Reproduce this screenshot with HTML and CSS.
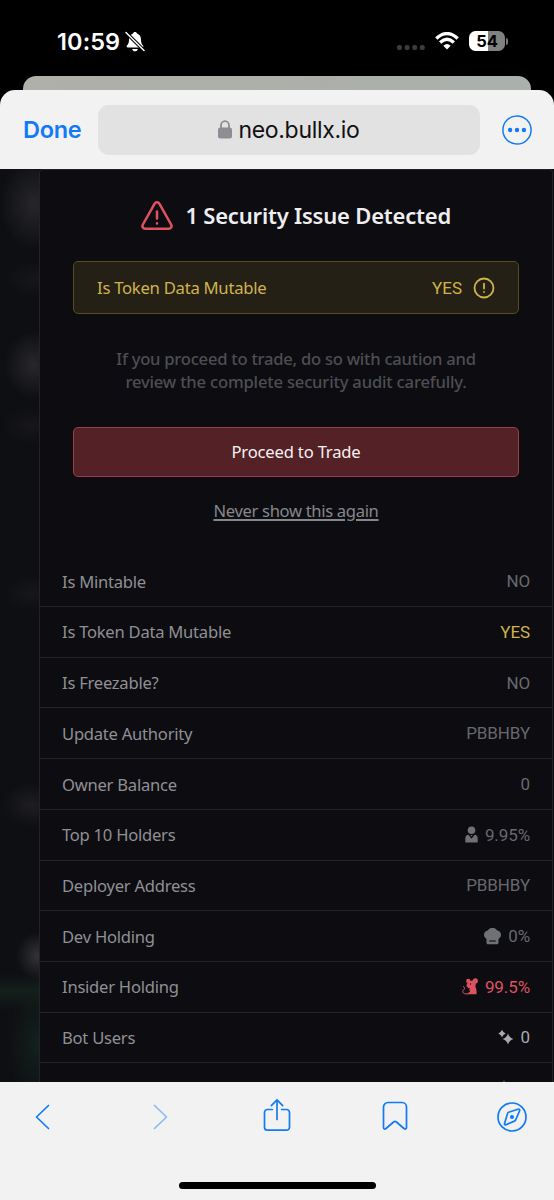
FILE: index.html
```html
<!DOCTYPE html>
<html lang="en">
<head>
<meta charset="utf-8">
<title>neo.bullx.io</title>
<link rel="stylesheet" href="styles.css">
</head>
<body>
<div class="phone">
  <header class="status">
    <div class="clock"><span>10:59</span>
      <svg width="20" height="22" viewBox="0 0 20 22"><path d="M10 1c-1.1 0-1.8.7-2 1.6C5.300 3.500 4 5.700 4 8.500c0 3.500-.8 4.700-2 6-.8.9-.3 2 .7 2h14.600c1 0 1.500-1.100.7-2-1.200-1.300-2-2.500-2-6 0-2.800-1.300-5-4-5.900C11.800 1.700 11.100 1 10 1zM7.200 18c.3 1.500 1.400 2.300 2.800 2.300s2.500-.8 2.800-2.300z" fill="#fff"/><path d="M1 1.500 19 19.500" stroke="#000" stroke-width="3.600"/><path d="M1 1.500 19 19.500" stroke="#fff" stroke-width="1.500" stroke-linecap="round"/></svg>
    </div>
    <div class="signals">
      <svg width="28" height="5" viewBox="0 0 28 5" fill="#3c3c3e"><rect width="5" height="5" rx="2"/><rect x="7.600" width="5" height="5" rx="2"/><rect x="15.200" width="5" height="5" rx="2"/><rect x="22.800" width="5" height="5" rx="2"/></svg>
      <svg class="wifi" width="24" height="18" viewBox="0 0 24 18" fill="none" stroke="#fff" stroke-width="3.300"><path d="M1.300 6.500Q12-3.300 22.700 6.500"/><path d="M5.100 10.400Q12 4.200 18.900 10.400"/><path d="m8.300 13.700 3.700 3.800 3.700-3.800Q12 10.500 8.300 13.700z" fill="#fff" stroke="none"/></svg>
      <div class="battery">54</div><i class="cap"></i>
    </div>
  </header>
  <div class="back-sheet"></div>
  <section class="sheet">
    <nav class="address">
      <span class="done">Done</span>
      <div class="url">
        <svg width="14" height="19" viewBox="0 0 14 19"><rect y="7.500" width="14" height="11" rx="2.300" fill="#8d8d92"/><path d="M3 8.500V5.500a4 4.300 0 0 1 8 0v3" fill="none" stroke="#8d8d92" stroke-width="1.800"/></svg>
        <span>neo.bullx.io</span>
      </div>
      <svg class="more" width="30" height="30" viewBox="0 0 30 30"><circle cx="15" cy="15" r="14.100" fill="none" stroke="#127af5" stroke-width="1.500"/><g fill="#127af5"><circle cx="8.100" cy="15" r="2.200"/><circle cx="15" cy="15" r="2.200"/><circle cx="21.900" cy="15" r="2.200"/></g></svg>
    </nav>
    <main class="page">
      <aside class="backdrop"></aside>
      <div class="panel">
        <h1 class="title">
          <svg width="32" height="30" viewBox="0 0 32 30" fill="none" stroke="#e05260" stroke-width="2.500" stroke-linecap="round" stroke-linejoin="round"><path d="M13.500 2.800a2.900 2.900 0 0 1 5 0l11.600 20.700c1.100 2.100 0 4.200-2.400 4.200H4.300c-2.400 0-3.500-2.100-2.400-4.200zM16 10.500v7M16 22.300v.1"/></svg>
          <span>1 Security Issue Detected</span>
        </h1>
        <div class="notice"><span class="notice-label">Is Token Data Mutable</span><span class="yes">YES</span>
          <svg width="22" height="22" viewBox="0 0 22 22" fill="none" stroke="#d0b34c" stroke-width="1.800" stroke-linecap="round"><circle cx="11" cy="11" r="9.500"/><path d="M11 6.700v4.800M11 14.900v.1"/></svg>
        </div>
        <p class="caution"><span class="c1">If you proceed to trade, do so with caution and</span><br><span class="c2">review the complete security audit carefully.</span></p>
        <button class="proceed">Proceed to Trade</button>
        <a class="never">Never show this again</a>
        <div class="list">
          <div class="row"><span>Is Mintable</span><b>NO</b></div>
          <div class="row"><span>Is Token Data Mutable</span><b class="gold">YES</b></div>
          <div class="row"><span>Is Freezable?</span><b>NO</b></div>
          <div class="row"><span>Update Authority</span><b>PBBHBY</b></div>
          <div class="row"><span>Owner Balance</span><b>0</b></div>
          <div class="row"><span>Top 10 Holders</span><b><svg width="13" height="17" viewBox="0 0 13 17" fill="#707174"><circle cx="6.500" cy="4.200" r="3.800"/><path d="M.3 16.500v-4c0-2.300 1.300-3.500 3.100-3.700l3.100 3.900 3.100-3.900c1.800.2 3.100 1.400 3.100 3.700v4z"/><path d="m5.300 9 1.200 1.400L7.700 9z"/></svg>9.95%</b></div>
          <div class="row"><span>Deployer Address</span><b>PBBHBY</b></div>
          <div class="row"><span>Dev Holding</span><b><svg width="17" height="17" viewBox="0.500 0 17 17"><path fill="#707174" d="M3 14.800V10.900A4.400 4.400 0 0 1 4.200 2.600 5.500 5.500 0 0 1 13.800 2.600 4.400 4.400 0 0 1 15 10.900v3.900c0 .9-.6 1.500-1.500 1.500h-9c-.9 0-1.500-.6-1.500-1.500z"/><path d="M5.800 13h6.400" stroke="#0c0c11" stroke-width="1.100"/></svg>0%</b></div>
          <div class="row"><span>Insider Holding</span><b class="red"><svg width="16" height="17" viewBox="0 0 16 17"><g fill="#dc5260"><circle cx="6.300" cy="2.900" r="2.200"/><circle cx="13.300" cy="2.900" r="2.600"/><path d="M4.500 7.300C5.200 4.800 7.300 2.500 10 2.500c2.600 0 4.300 2 3.700 4.200-.3 1-.4 1.500-.2 2.300 1 2 1.300 4.600 1.100 7.300H6c0-1.500.7-2.100 2-2.300-.6-1.700-.7-2.700-.3-4l-2 .2.300-1.200H5z"/></g><path d="M6.500 15.900H4c-3.300 0-4-2.600-2.200-4.200 1.400-1.300.7-2.900-.8-3.200" fill="none" stroke="#dc5260" stroke-width="1"/><circle cx="8.500" cy="6" r=".7" fill="#0c0c11"/></svg>99.5%</b></div>
          <div class="row"><span>Bot Users</span><b class="bright"><svg width="16" height="16" viewBox="0 0 16 16" fill="#aaaaad"><path d="M10 4.500Q11.300 8.700 15.500 10 11.300 11.300 10 15.500 8.700 11.300 4.500 10 8.700 8.700 10 4.500zM4 .8Q5 3.500 7.700 4.500 5 5.500 4 8.200 3 5.500.3 4.500 3 3.500 4 .8z"/></svg>0</b></div>
          <div class="row next"><svg width="6" height="8" viewBox="0 0 6 8"><path d="m3 0 3 8H0z" fill="#707174"/></svg></div>
        </div>
      </div>
    </main>
    <footer class="toolbar">
      <svg width="15" height="26" viewBox="0 0 15 26"><path d="M13.500 1.500 1.500 13l12 11.500"/></svg>
      <svg class="dim" width="15" height="26" viewBox="0 0 15 26"><path d="m1.500 1.500 12 11.500-12 11.500"/></svg>
      <svg class="share" width="28" height="34" viewBox="0 0 28 34"><path d="M9.300 11.500H4.500a3 3 0 0 0-3 3v14.700a3 3 0 0 0 3 3h19a3 3 0 0 0 3-3V14.500a3 3 0 0 0-3-3h-4.800M14 21.500V2M8.300 7.600 14 1.900l5.700 5.700"/></svg>
      <svg class="bookmark" width="26" height="30" viewBox="0 0 26 30"><path d="M6 1.500h14a4.500 4.500 0 0 1 4.500 4.500v20.500c0 1.600-1.400 2-2.500 1l-7.600-6.500q-1.400-1.200-2.800 0L4 27.500c-1.100 1-2.500.6-2.500-1V6A4.500 4.500 0 0 1 6 1.500z"/></svg>
      <svg width="30" height="30" viewBox="0 0 30 30"><circle cx="15" cy="15" r="14"/><path d="m11.600 10.300 9.300-3q2.400-.5 1.600 1.700l-3.700 8.600q-.4 1-1.400 1.500L9 22.700q-2.100.5-1.400-1.500l2.800-9.300q.3-1.200 1.200-1.600z"/><circle cx="15" cy="15" r="1.200" fill="#127af5"/></svg>
    </footer>
    <div class="home"></div>
  </section>
</div>
</body>
</html>
```
FILE: styles.css
```css
* { box-sizing: border-box; }
body { margin: 0; background: #000; }
svg { display: block; flex: none; }
.phone { width: 554px; height: 1200px; overflow: hidden; background: #000; display: flex; flex-direction: column; font-family: "Noto Sans", sans-serif; }

.status { height: 76px; display: flex; justify-content: space-between; padding: 0 46px 0 57px; color: #fff; }
.clock { display: flex; align-items: center; gap: 5px; height: 83px; font: 600 23.500px/30px Inter, sans-serif; }
.clock span { width: 63px; letter-spacing: .1px; white-space: nowrap; }
.signals { display: flex; align-items: center; height: 82px; }
.signals svg:first-child { margin: 13px 10px 0 0; }
.wifi { margin-right: 10px; }
.battery { width: 36px; height: 20px; border-radius: 6.500px; background: linear-gradient(90deg, #fff 54%, #818181 54%); color: #000; font: 700 16.500px/20px Inter, sans-serif; text-align: center; }
.cap { width: 2px; height: 7px; margin-left: 1px; border-radius: 0 2px 2px 0; background: #777; }

.back-sheet { height: 14px; margin: 0 23px; border-radius: 13px 13px 0 0; background: linear-gradient(90deg, #aeb0a9, #acafa9 60%, #aab1ad); }
.sheet { flex: 1; display: flex; flex-direction: column; border-radius: 15px 15px 0 0; background: #f2f2f2; overflow: hidden; }
.address { height: 79px; display: flex; align-items: center; padding: 0 22px 0 23px; }
.done { width: 75px; font: 600 23.500px/30px Inter, sans-serif; letter-spacing: -.3px; color: #127af5; }
.url { width: 382px; height: 50px; margin-right: 22px; border-radius: 11px; background: #e2e2e3; display: flex; align-items: center; justify-content: center; gap: 6px; font: 400 23px/30px Inter, sans-serif; letter-spacing: -.3px; color: #111; }

.page { height: 913px; display: flex; background: #0c0c11; overflow: hidden; }
.backdrop { width: 39px; flex: none; background:
  radial-gradient(ellipse 34px 46px at 34px 35px, #27272b, transparent),
  radial-gradient(ellipse 30px 34px at 34px 196px, #28282c, transparent),
  radial-gradient(ellipse 28px 18px at 34px 110px, #17171b, transparent),
  radial-gradient(ellipse 28px 18px at 30px 257px, #17171b, transparent),
  radial-gradient(ellipse 28px 18px at 32px 424px, #17171b, transparent),
  radial-gradient(ellipse 30px 22px at 32px 636px, #1e1e22, transparent),
  radial-gradient(ellipse 22px 24px at 38px 787px, #343438, transparent),
  linear-gradient(transparent 805px, #14201b 822px, transparent 842px),
  radial-gradient(ellipse 30px 60px at 38px 875px, #13211d, transparent), #0e0f12; }
.panel { width: 514px; flex: none; display: flex; flex-direction: column; align-items: center; border: 1px solid #222227; border-bottom: 0; border-radius: 4px 4px 0 0; background: #0c0c11; }
.panel > * { flex: none; }
.title { display: flex; align-items: center; gap: 12.500px; height: 30px; margin: 31px 0 0; font-weight: 600; font-size: 22px; line-height: 30px; color: #eeeef0; white-space: nowrap; }
.title svg { margin-bottom: 1px; }
.title span { letter-spacing: -.2px; margin-bottom: 2px; }
.notice { width: 446px; height: 53px; margin-top: 30px; padding: 0 23px; display: flex; align-items: center; border: 1.500px solid #5b4b22; border-radius: 5px; background: #252016; color: #d0b34c; font-size: 16.700px; }
.notice-label { flex: 1; letter-spacing: -.28px; }
.notice .yes { margin-right: 11px; font-family: Roboto, sans-serif; font-size: 17px; }
.caution { margin: 34px 0 0; font-size: 16.600px; font-weight: 500; line-height: 22.700px; text-align: center; color: #4e4e52; white-space: nowrap; }
.c1 { letter-spacing: -.24px; }
.c2 { letter-spacing: -.18px; }
.proceed { width: 446px; height: 50px; margin-top: 34px; padding: 0; border: 1px solid #99404b; border-radius: 5px; background: #532126; color: #f7f0f1; font: 400 16.600px/24px "Noto Sans", sans-serif; letter-spacing: -.18px; }
.never { margin-top: 21px; font-size: 16.600px; line-height: 26px; letter-spacing: -.33px; color: #87878b; text-decoration: underline; text-underline-offset: 2px; text-decoration-thickness: 1.500px; }
.list { width: 100%; margin-top: 32px; }
.row { height: 50.700px; display: flex; align-items: center; justify-content: space-between; padding: 0 22px; border-bottom: 1px solid #222227; font-size: 16.600px; letter-spacing: -.25px; color: #909094; }
.row b { display: flex; align-items: center; gap: 7px; font: 400 17px/24px Roboto, sans-serif; letter-spacing: -.1px; color: #68686d; }
.row b.gold { color: #d0b34c; }
.row b.red { color: #dc5260; }
.row b.bright { color: #aaaaad; }
.row.next { align-items: flex-start; justify-content: flex-end; padding: 17px 45px 0 0; }

.toolbar { height: 70px; width: 587px; margin-left: -16px; display: grid; grid-template-columns: repeat(5, 1fr); align-items: center; justify-items: center; fill: none; stroke: #127af5; stroke-width: 1.700; stroke-linecap: round; stroke-linejoin: round; }
.share { margin-bottom: 4px; }
.bookmark { margin-bottom: 2px; }
.dim { opacity: .45; }
.home { width: 197px; height: 7px; margin: 30px 0 0 179px; border-radius: 4px; background: #000; }
```
